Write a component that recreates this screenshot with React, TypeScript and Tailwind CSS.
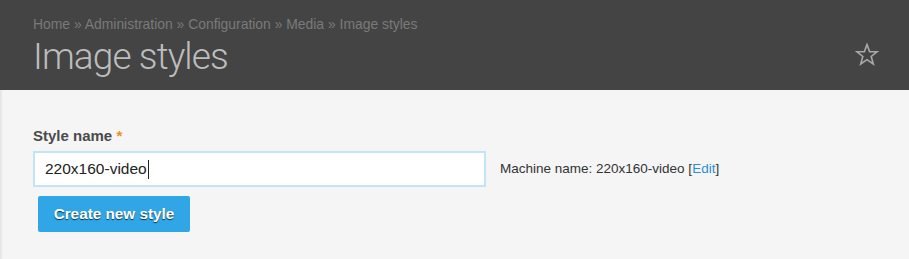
import React from "react";

export default function App() {
  return (
    <div className="w-[909px] h-[259px] bg-[#f5f5f5] overflow-hidden" style={{ fontFamily: '"Liberation Sans", Arial, sans-serif' }}>
      <div className="h-[90px] bg-[#444444] flex items-start justify-between pl-[33px] pr-[30px]">
        <div className="flex flex-col">
          <div className="mt-[15px] text-[13.9px] leading-[18px] text-[#7a7a7a]">
            Home » Administration » Configuration » Media » Image styles
          </div>
          <h1 className="mt-[1px] text-[37px] leading-[46px] font-light text-[#bdbdbd] tracking-[-0.9px]" style={{ fontFamily: 'Roboto, "Liberation Sans", sans-serif' }}>
            Image styles
          </h1>
        </div>
        <svg className="mt-[43px]" width="24" height="24" viewBox="0 0 24 24" fill="none" stroke="#a8a8a8" strokeWidth="1.6" strokeLinejoin="miter">
          <polygon points="12,1.5 14.6,8.6 22,8.8 16.2,13.5 18.3,21 12,16.7 5.7,21 7.8,13.5 2,8.8 9.4,8.6" />
        </svg>
      </div>
      <div className="flex h-[169px]">
        <div className="w-[3px] bg-gradient-to-r from-[#e2e2e2] to-[#f5f5f5]" />
        <div className="pl-[30px] pt-[37px] flex flex-col">
          <div className="text-[15px] leading-[18px] font-bold text-[#4a4a4a]">
            Style name <span className="text-[#e6921e]">*</span>
          </div>
          <div className="flex items-center mt-[6px]">
            <div className="w-[453px] h-[36px] bg-white border-2 border-[#c2e5f6] flex items-center pl-[10px] text-[15.5px] text-[#222]">
              220x160-video<span className="inline-block w-[1px] h-[19px] bg-[#222] ml-[1px]" />
            </div>
            <div className="ml-[14px] text-[13.5px] text-[#333]">
              Machine name: 220x160-video [<span className="text-[#2b8fd6]">Edit</span>]
            </div>
          </div>
          <button className="mt-[9px] ml-[5px] w-[152px] h-[36px] rounded-[2px] bg-[#30a6e6] text-white text-[15.3px] font-bold" style={{ textShadow: "0 1px 1px rgba(0,0,0,0.7)" }}>
            Create new style
          </button>
        </div>
      </div>
    </div>
  );
}
